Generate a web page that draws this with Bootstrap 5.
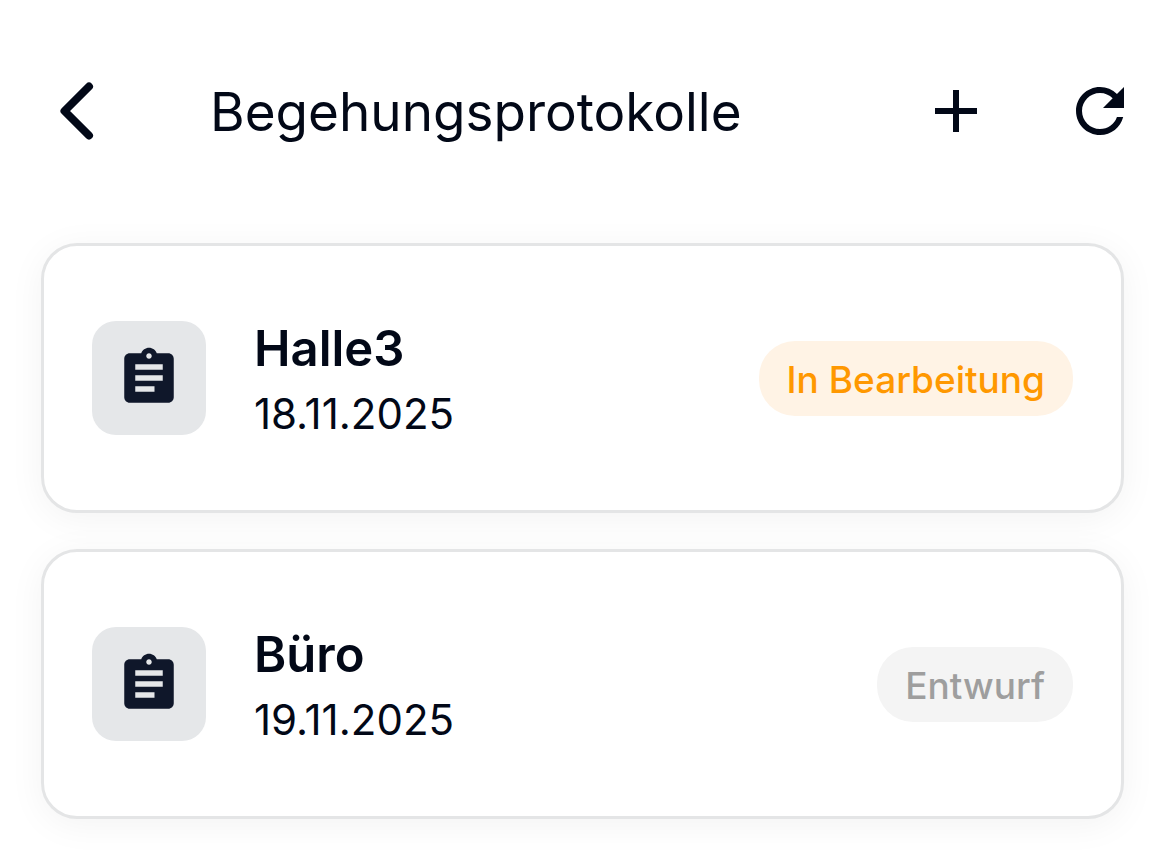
<!DOCTYPE html>
<html lang="de">
<head>
<meta charset="utf-8">
<meta name="viewport" content="width=device-width, initial-scale=1">
<title>Begehungsprotokolle</title>
<link href="https://cdn.jsdelivr.net/npm/bootstrap@5.3.0/dist/css/bootstrap.min.css" rel="stylesheet">
<style>
  body { font-family: Inter, "Liberation Sans", sans-serif; color: #020817; background: #fff; }
  .app-bar { padding: 75px 31px 0 41px; }
  .app-title { font-size: 53px; line-height: 68px; font-weight: 400; margin-left: 97px; padding-top: 2px; }
  .icon-btn { width: 72px; height: 72px; color: inherit; }
  .icon-btn svg, .tile svg { display: block; width: 100%; height: 100%; fill: currentColor; }
  .actions { gap: 72px; }
  .protocols { padding: 96px 43px 44px 41px; gap: 36px; }
  .protocol { min-height: 270px; padding: 0 48px; gap: 48px; border: 3px solid #e4e5e6; border-radius: 36px; background: #fff; color: inherit; box-shadow: 0 6px 36px rgba(0, 0, 0, .05); }
  .tile { width: 114px; height: 114px; padding: 24px; border-radius: 24px; background: #e5e7e9; color: #0f172a; }
  .protocol-text { padding-top: 6px; }
  .protocol-name { font-size: 49px; line-height: 66px; font-weight: 600; margin: 0; }
  .protocol-date { font-size: 42px; line-height: 64px; }
  .status { padding: 3px 28px 0; font-size: 37px; line-height: 72px; font-weight: 500; border-radius: 36px; }
  .status-progress { background: #fff3e5; color: #ff9800; }
  .status-draft { background: #f4f4f4; color: #9e9e9e; }
</style>
</head>
<body>
<header class="app-bar d-flex align-items-center">
  <button type="button" class="icon-btn btn p-0 border-0" aria-label="Zurück">
    <svg viewBox="0 0 72 72" aria-hidden="true"><path d="M48 11.500 23.500 36 48 60.500" fill="none" stroke="currentColor" stroke-width="8" stroke-linecap="round" stroke-linejoin="round"/></svg>
  </button>
  <h1 class="app-title mb-0 flex-grow-1">Begehungsprotokolle</h1>
  <div class="actions d-flex">
    <button type="button" class="icon-btn btn p-0 border-0" aria-label="Hinzufügen">
      <svg viewBox="0 0 24 24" aria-hidden="true"><path d="M19 13h-6v6h-2v-6H5v-2h6V5h2v6h6v2z"/></svg>
    </button>
    <button type="button" class="icon-btn btn p-0 border-0" aria-label="Aktualisieren">
      <svg viewBox="0 0 24 24" aria-hidden="true"><path d="M17.65 6.35A7.958 7.958 0 0 0 12 4c-4.42 0-7.99 3.58-7.99 8s3.57 8 7.99 8c3.73 0 6.84-2.55 7.73-6h-2.08A5.99 5.99 0 0 1 12 18c-3.31 0-6-2.69-6-6s2.69-6 6-6c1.66 0 3.14.69 4.22 1.78L13 11h7V4l-2.35 2.35z"/></svg>
    </button>
  </div>
</header>

<main class="protocols d-flex flex-column">
  <a href="#halle3" class="protocol d-flex align-items-center text-decoration-none">
    <span class="tile flex-shrink-0">
      <svg viewBox="0 0 24 24" aria-hidden="true"><path d="M19 3h-4.18C14.4 1.84 13.3 1 12 1s-2.4.84-2.82 2H5c-1.1 0-2 .9-2 2v14c0 1.1.9 2 2 2h14c1.1 0 2-.9 2-2V5c0-1.1-.9-2-2-2zm-7 0c.55 0 1 .45 1 1s-.45 1-1 1-1-.45-1-1 .45-1 1-1zm2 14H7v-2h7v2zm3-4H7v-2h10v2zm0-4H7V7h10v2z"/></svg>
    </span>
    <div class="protocol-text flex-grow-1">
      <h2 class="protocol-name">Halle3</h2>
      <div class="protocol-date">18.11.2025</div>
    </div>
    <span class="status status-progress text-nowrap">In Bearbeitung</span>
  </a>
  <a href="#buero" class="protocol d-flex align-items-center text-decoration-none">
    <span class="tile flex-shrink-0">
      <svg viewBox="0 0 24 24" aria-hidden="true"><path d="M19 3h-4.18C14.4 1.84 13.3 1 12 1s-2.4.84-2.82 2H5c-1.1 0-2 .9-2 2v14c0 1.1.9 2 2 2h14c1.1 0 2-.9 2-2V5c0-1.1-.9-2-2-2zm-7 0c.55 0 1 .45 1 1s-.45 1-1 1-1-.45-1-1 .45-1 1-1zm2 14H7v-2h7v2zm3-4H7v-2h10v2zm0-4H7V7h10v2z"/></svg>
    </span>
    <div class="protocol-text flex-grow-1">
      <h2 class="protocol-name">Büro</h2>
      <div class="protocol-date">19.11.2025</div>
    </div>
    <span class="status status-draft text-nowrap">Entwurf</span>
  </a>
</main>
<script src="https://cdn.jsdelivr.net/npm/bootstrap@5.3.0/dist/js/bootstrap.bundle.min.js"></script>
</body>
</html>
